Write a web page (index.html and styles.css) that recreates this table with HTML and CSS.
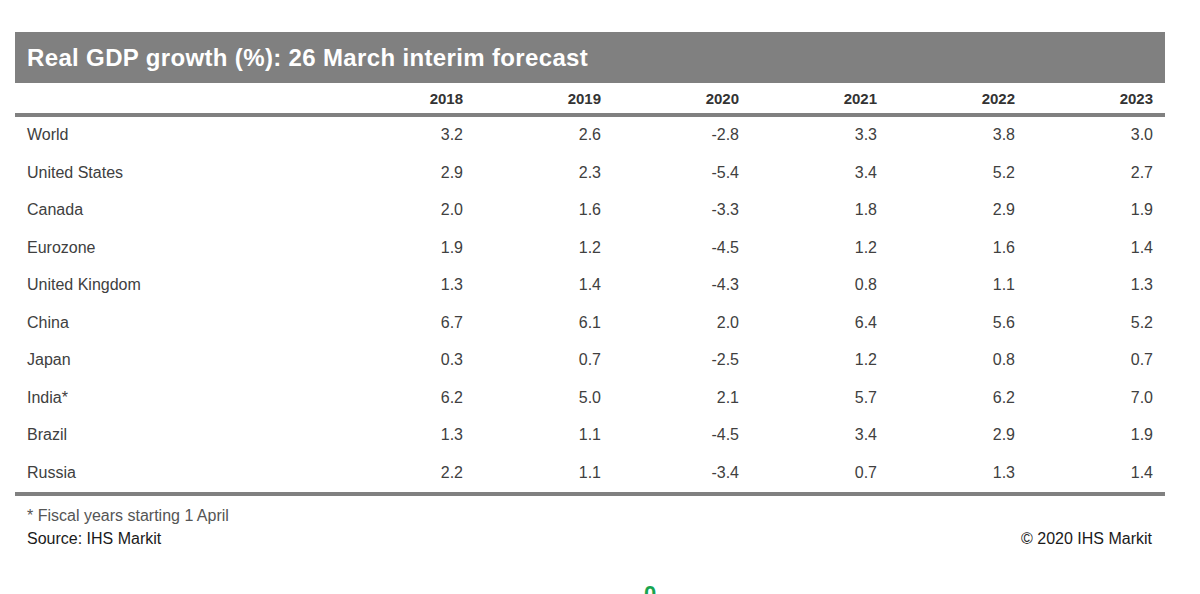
FILE: index.html
```html
<!DOCTYPE html>
<html lang="en">
<head>
<meta charset="utf-8">
<title>Real GDP growth</title>
<link rel="stylesheet" href="styles.css">
</head>
<body>
<div class="page">
  <div class="panel">
    <div class="band"><h1 class="title">Real GDP growth (%): 26 March interim forecast</h1></div>
    <div class="grid head">
      <div></div><div>2018</div><div>2019</div><div>2020</div><div>2021</div><div>2022</div><div>2023</div>
    </div>
    <div class="rule"></div>
    <div class="body">
      <div class="grid row"><div class="name">World</div><div>3.2</div><div>2.6</div><div>-2.8</div><div>3.3</div><div>3.8</div><div>3.0</div></div>
      <div class="grid row"><div class="name">United States</div><div>2.9</div><div>2.3</div><div>-5.4</div><div>3.4</div><div>5.2</div><div>2.7</div></div>
      <div class="grid row"><div class="name">Canada</div><div>2.0</div><div>1.6</div><div>-3.3</div><div>1.8</div><div>2.9</div><div>1.9</div></div>
      <div class="grid row"><div class="name">Eurozone</div><div>1.9</div><div>1.2</div><div>-4.5</div><div>1.2</div><div>1.6</div><div>1.4</div></div>
      <div class="grid row"><div class="name">United Kingdom</div><div>1.3</div><div>1.4</div><div>-4.3</div><div>0.8</div><div>1.1</div><div>1.3</div></div>
      <div class="grid row"><div class="name">China</div><div>6.7</div><div>6.1</div><div>2.0</div><div>6.4</div><div>5.6</div><div>5.2</div></div>
      <div class="grid row"><div class="name">Japan</div><div>0.3</div><div>0.7</div><div>-2.5</div><div>1.2</div><div>0.8</div><div>0.7</div></div>
      <div class="grid row"><div class="name">India*</div><div>6.2</div><div>5.0</div><div>2.1</div><div>5.7</div><div>6.2</div><div>7.0</div></div>
      <div class="grid row"><div class="name">Brazil</div><div>1.3</div><div>1.1</div><div>-4.5</div><div>3.4</div><div>2.9</div><div>1.9</div></div>
      <div class="grid row"><div class="name">Russia</div><div>2.2</div><div>1.1</div><div>-3.4</div><div>0.7</div><div>1.3</div><div>1.4</div></div>
    </div>
    <div class="rule"></div>
    <div class="foot">
      <div class="note">* Fiscal years starting 1 April</div>
      <div class="source-line"><span class="source">Source: IHS Markit</span><span class="copy">© 2020 IHS Markit</span></div>
    </div>
  </div>
  <div class="marker">0</div>
</div>
</body>
</html>
```
FILE: styles.css
```css
html, body {
  margin: 0;
  padding: 0;
  background: #ffffff;
  overflow: hidden;
}
body {
  font-family: "Liberation Sans", Arial, sans-serif;
  width: 1200px;
  height: 594px;
}
.page {
  padding: 32px 0 0 15px;
}
.panel {
  width: 1150px;
}
.band {
  background: #808080;
  height: 51px;
  display: flex;
  align-items: center;
  padding-left: 12px;
}
.title {
  margin: 0;
  color: #ffffff;
  font-size: 24px;
  font-weight: bold;
  letter-spacing: 0.35px;
  line-height: 1;
  padding-top: 1px;
}
.grid {
  display: grid;
  grid-template-columns: 322px repeat(6, 138px);
}
.grid > div {
  text-align: right;
  padding-right: 12px;
}
.grid > .name {
  text-align: left;
  padding-left: 12px;
  padding-right: 0;
}
.head {
  height: 30px;
  align-items: center;
  font-size: 15px;
  font-weight: bold;
  color: #333333;
}
.rule {
  height: 4px;
  background: #808080;
}
.row {
  height: 37.5px;
  align-items: center;
  font-size: 16px;
  color: #404040;
  padding-bottom: 1px;
  box-sizing: border-box;
}
.foot {
  padding: 8px 13px 0 12px;
  font-size: 16px;
  line-height: 23px;
}
.note {
  color: #555555;
}
.source-line {
  display: flex;
  justify-content: space-between;
}
.source, .copy {
  color: #1a1a1a;
}
.marker {
  margin-top: 33px;
  padding-left: 629px;
  font-size: 22px;
  font-weight: bold;
  color: #18a550;
  line-height: 22px;
}
```
